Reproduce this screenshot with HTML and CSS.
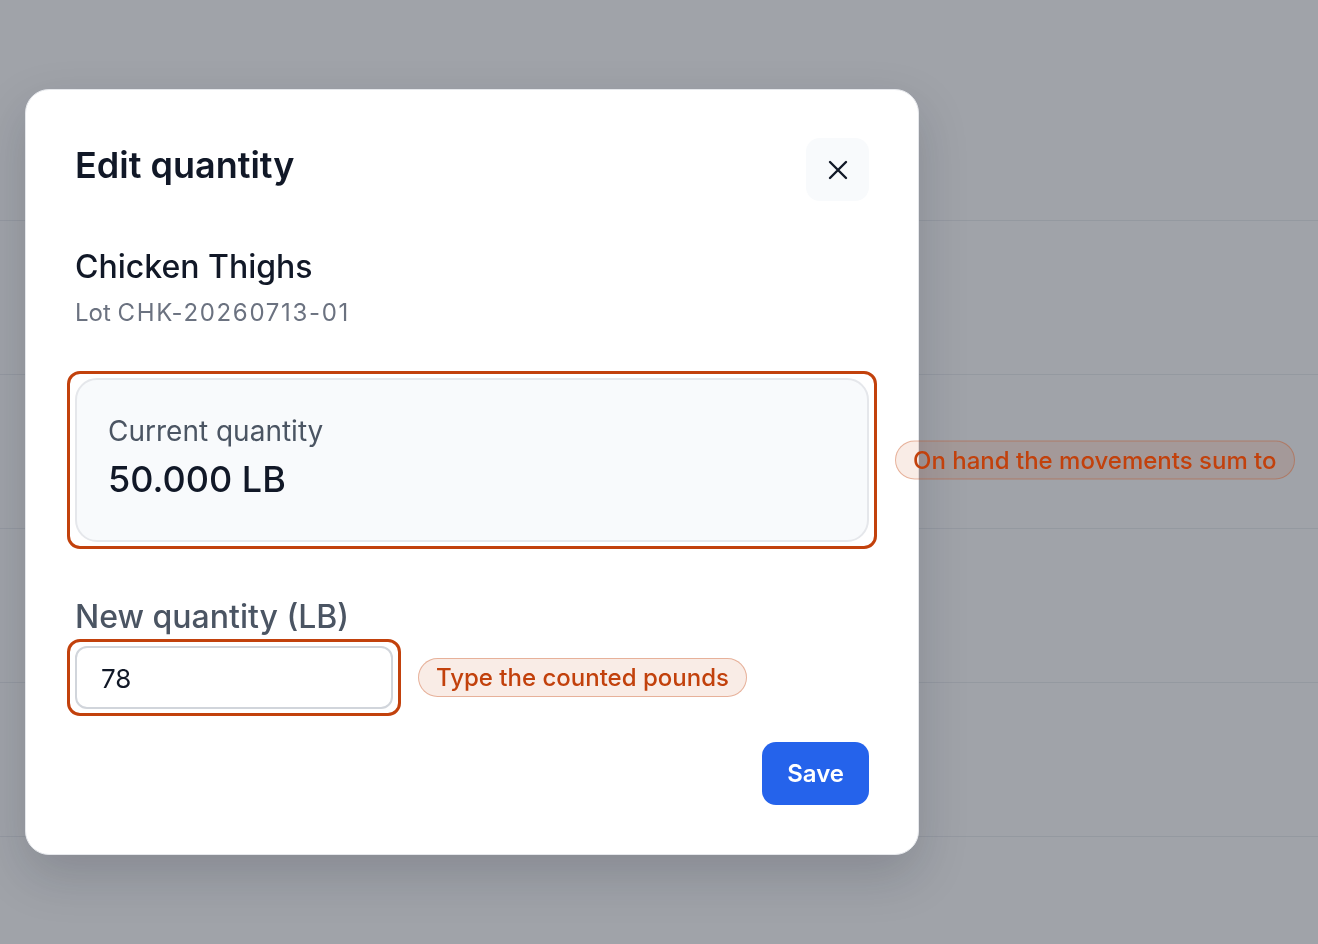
FILE: index.html
```html
<!DOCTYPE html>
<html>
<head>
  <meta charset="utf-8">
  <title>Edit quantity</title>
  <link rel="stylesheet" href="styles.css">
</head>
<body>
  <!-- page behind the dialog -->
  <div class="page">
    <div class="page-head"></div>
    <div class="row"></div>
    <div class="row"></div>
    <div class="row"></div>
    <div class="row"></div>
    <div class="row"></div>
  </div>

  <div class="overlay">
    <div class="modal">
      <div class="modal-head">
        <h2 class="modal-title">Edit quantity</h2>
        <button class="close-btn" type="button">
          <svg width="20" height="20" viewBox="0 0 20 20" fill="none" stroke="#111827" stroke-width="2.4" stroke-linecap="round">
            <path d="M2 2L18 18M18 2L2 18"/>
          </svg>
        </button>
      </div>

      <div class="item">
        <div class="item-name">Chicken Thighs</div>
        <div class="item-lot">Lot <span class="lot-code">CHK-20260713-01</span></div>
      </div>

      <div class="mark mark-card">
        <div class="qty-card">
          <div class="qty-label">Current quantity</div>
          <div class="qty-value">50.000 LB</div>
        </div>
        <span class="note note-side">On hand the movements sum to</span>
      </div>

      <div class="field">
        <label class="field-label" for="new_qty">New quantity (LB)</label>
        <div class="field-row">
          <div class="mark">
            <input class="qty-input" type="text" id="new_qty" value="78">
          </div>
          <span class="note">Type the counted pounds</span>
        </div>
      </div>

      <div class="modal-foot">
        <button class="save-btn" type="button">Save</button>
      </div>
    </div>
  </div>
</body>
</html>
```

FILE: styles.css
```css
* {
  box-sizing: border-box;
}

body {
  margin: 0;
  font-family: Inter, "Noto Sans", sans-serif;
  color: #111827;
  background: #ffffff;
}

/* background page */
.page-head {
  height: 220px;
}

.row {
  height: 154px;
  border-top: 1px solid #eceef1;
}

/* dialog */
.overlay {
  position: fixed;
  top: 0;
  left: 0;
  right: 0;
  bottom: 0;
  background: rgba(17, 24, 39, 0.4);
  padding: 89px 0 0 25px;
}

.modal {
  width: 894px;
  background: #ffffff;
  border: 1px solid #e5e7eb;
  border-radius: 24px;
  padding: 48px 49px 49px 49px;
  box-shadow: 0 20px 50px rgba(17, 24, 39, 0.18);
}

.modal-head {
  display: flex;
  justify-content: space-between;
  align-items: flex-start;
}

.modal-title {
  margin: 0;
  font-size: 36px;
  line-height: 1.5;
  font-weight: 600;
  color: #111827;
}

.close-btn {
  width: 63px;
  height: 63px;
  border: none;
  border-radius: 14px;
  background: #f8fafc;
  display: flex;
  align-items: center;
  justify-content: center;
  padding: 0;
  cursor: pointer;
}

.item {
  margin-top: 46px;
}

.item-name {
  font-size: 32px;
  font-weight: 500;
  color: #111827;
}

.item-lot {
  margin-top: 12px;
  font-size: 24px;
  color: #6b7280;
}

.lot-code {
  letter-spacing: 0.07em;
}

/* annotation outline */
.mark {
  position: relative;
  border: 3px solid #c2410c;
  border-radius: 13px;
  padding: 4px 5px;
}

.mark-card {
  margin: 44px -8px 0 -8px;
}

.qty-card {
  background: #f8fafc;
  border: 2px solid #e5e7eb;
  border-radius: 22px;
  padding: 35px 32px 41px 31px;
}

.qty-label {
  font-size: 28px;
  line-height: 32px;
  color: #4b5563;
}

.qty-value {
  margin-top: 12px;
  font-size: 36px;
  line-height: 40px;
  font-weight: 500;
  color: #111827;
}

.note {
  display: inline-block;
  font-size: 24px;
  font-weight: 500;
  color: #c2410c;
  background: rgba(194, 65, 12, 0.1);
  border: 1px solid rgba(194, 65, 12, 0.35);
  border-radius: 999px;
  padding: 4px 17px;
  white-space: nowrap;
}

.note-side {
  position: absolute;
  left: calc(100% + 21px);
  top: 50%;
  transform: translateY(-50%);
}

.field {
  margin-top: 48px;
}

.field-label {
  display: block;
  font-size: 32px;
  font-weight: 500;
  color: #4b5563;
}

.field-row {
  display: flex;
  align-items: center;
  gap: 17px;
  margin: 3px 0 0 -8px;
}

.qty-input {
  display: block;
  width: 318px;
  height: 63px;
  border: 2px solid #d1d5db;
  border-radius: 12px;
  padding: 2px 24px 0 24px;
  font-family: Inter, "Noto Sans", sans-serif;
  font-size: 26px;
  color: #111827;
  background: #ffffff;
  outline: none;
}

.modal-foot {
  display: flex;
  justify-content: flex-end;
  margin-top: 26px;
}

.save-btn {
  height: 63px;
  padding: 0 25px;
  border: none;
  border-radius: 14px;
  background: #2563eb;
  color: #ffffff;
  font-family: Inter, "Noto Sans", sans-serif;
  font-size: 24px;
  font-weight: 600;
  cursor: pointer;
}
```
